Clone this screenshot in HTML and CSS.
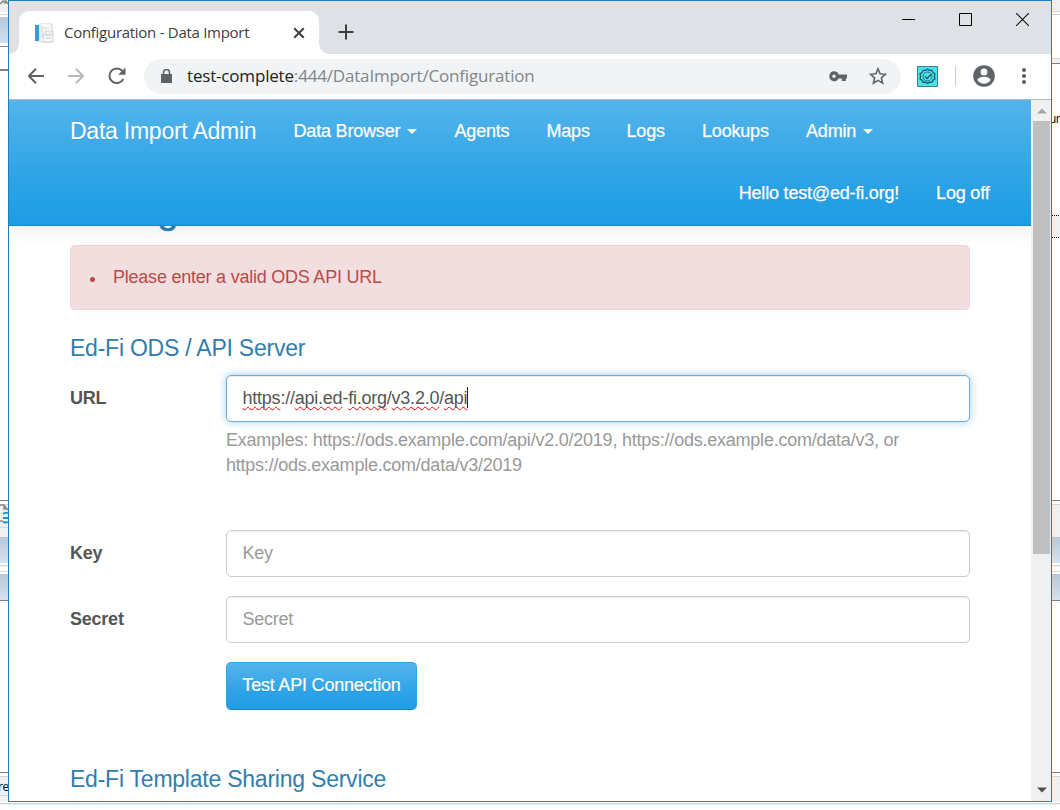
FILE: index.html
```html
<!DOCTYPE html>
<html lang="en">
<head>
<meta charset="utf-8">
<title>Configuration - Data Import</title>
<link rel="stylesheet" href="styles.css">
</head>
<body>
<div class="desktop">
  <div class="edge edge-left">
    <svg class="edge-icon edge-icon-top" width="8" height="5" viewBox="0 0 8 5"><path d="M0 4L3 1 5 3 7 1M5 0l3 4" stroke="#888" stroke-width="1.5" fill="none"/></svg>
    <svg class="edge-icon edge-icon-mid" width="8" height="20" viewBox="0 0 8 20"><path d="M0 1h4l4 5M4 1v4h4M0 17h3" stroke="#888" stroke-width="1.4" fill="none"/><path d="M3 10q2-2 5-1M3 14h5M3 18q3 1 5 0" stroke="#189ad6" stroke-width="2" fill="none"/></svg>
    <span class="edge-text edge-text-bottom">re</span>
  </div>

  <main class="window">
    <header class="tabstrip">
      <div class="tab">
        <svg class="favicon" width="20" height="20" viewBox="0 0 20 20"><path d="M1 1h18v18H1z" fill="#eceff2"/><path d="M1 2h4v16H1z" fill="#4099d4"/><path d="M6 0h10l2 3v16H6z" fill="#f9f9f9" stroke="#d8dbde"/><path d="M8 3v11h3M9 5h6M11 8h8v4h-8z" fill="#eceef0" stroke="#d3d6da"/><path d="M9 12h10v7H9z" fill="#f7f7f7" stroke="#ccd0d4"/><path d="M12 15h5" stroke="#ccc"/></svg>
        <span class="tab-title">Configuration - Data Import</span>
        <svg class="tab-close" width="12" height="12" viewBox="0 0 12 12"><path d="M1.2 1.2l9.6 9.6M10.8 1.2l-9.6 9.6" stroke="#3c4043" stroke-width="2"/></svg>
      </div>
      <svg class="new-tab" width="16" height="16" viewBox="0 0 16 16"><path d="M8 .5v15M.5 8h15" stroke="#3c4043" stroke-width="2"/></svg>
      <div class="controls">
        <svg width="13" height="13" viewBox="0 0 13 13"><path d="M0 6.5h13" stroke="#000"/></svg>
        <svg width="13" height="13" viewBox="0 0 13 13"><path d="M.5.5h12v12H.5z" stroke="#000" fill="none"/></svg>
        <svg width="13" height="13" viewBox="0 0 13 13"><path d="M0 0l13 13M13 0L0 13" stroke="#111" stroke-width="1.1"/></svg>
      </div>
    </header>

    <div class="toolbar">
      <svg class="back" width="16" height="16" viewBox="0 0 16 16"><path d="M16 8H1.6M8 .8L1 8l7 7.2" stroke="#5f6368" stroke-width="2" fill="none"/></svg>
      <svg class="forward" width="16" height="16" viewBox="0 0 16 16"><path d="M0 8h14.4M8 .8L15 8l-7 7.2" stroke="#b8babc" stroke-width="2" fill="none"/></svg>
      <svg class="reload" width="18" height="18" viewBox="0 0 18 18"><path d="M15.3 12A7.3 7.3 0 1 1 14.3 4" stroke="#5f6368" stroke-width="2" fill="none"/><path d="M17.5.5v7.3h-7.3z" fill="#5f6368"/></svg>
      <div class="omnibox">
        <svg class="lock" width="11" height="14" viewBox="0 0 11 14"><path d="M0 5h11v9H0z" fill="#5f6368"/><path d="M2.5 5V3.4a3 3 0 0 1 6 0V5" stroke="#5f6368" stroke-width="1.5" fill="none"/></svg>
        <span class="address"><span class="host">test-complete</span>:444/DataImport/Configuration</span>
        <svg class="key" width="18" height="11" viewBox="0 0 18 11"><path fill-rule="evenodd" d="M5 .3a4.9 4.9 0 0 1 4.6 3.3H18v3.8h-1.2V10h-4V7.4H9.6A4.9 4.9 0 1 1 5 .3zM5 3.5a1.8 1.8 0 1 0 0 3.6 1.8 1.8 0 0 0 0-3.6z" fill="#5f6368"/></svg>
        <svg class="star" width="18" height="18" viewBox="0 0 18 18"><path d="M9 1.8l2.1 5 5.3.5-4 3.6 1.2 5.3L9 13.4l-4.6 2.8 1.2-5.3-4-3.6 5.3-.5z" stroke="#5f6368" stroke-width="1.6" fill="none"/></svg>
      </div>
      <svg class="extension" width="21" height="21" viewBox="0 0 21 21"><path d="M.5.5h20v20H.5z" fill="#45e3ea" stroke="#3f7f91"/><path d="M10.5 3.2l2 1.2 2.4-.1 1 2.2 2 1.3-.5 2.6.6 2.3-2 1.4-1.1 2.2-2.4-.1-2 1.3-2-1.3-2.4.1L5 14.1l-2-1.4.6-2.3L3 7.8l2-1.3 1.1-2.2 2.4.1z" fill="none" stroke="#245666" stroke-width="1.3"/><circle cx="10.5" cy="10.5" r="4.5" fill="none" stroke="#245666" stroke-width=".8"/><path d="M8 10.5l2 2 4.3-4.2" fill="none" stroke="#245666" stroke-width="1.3"/></svg>
      <span class="divider"></span>
      <svg class="profile" width="22" height="22" viewBox="0 0 22 22"><circle cx="11" cy="11" r="10.8" fill="#5f6368"/><circle cx="11" cy="7" r="3.4" fill="#fff"/><path d="M4.3 15.1c1.5-4.4 11.9-4.4 13.4 0a8 8 0 0 1-13.4 0z" fill="#fff"/></svg>
      <svg class="more" width="6" height="18" viewBox="0 0 6 18"><g fill="#5f6368"><circle cx="3" cy="3" r="2.1"/><circle cx="3" cy="9" r="2.1"/><circle cx="3" cy="15" r="2.1"/></g></svg>
    </div>

    <div class="viewport">
      <div class="page">
        <nav class="navbar">
          <div class="nav-row">
            <a class="brand">Data Import Admin</a>
            <a class="nav-browser">Data Browser<i class="caret"></i></a>
            <a class="nav-agents">Agents</a>
            <a class="nav-maps">Maps</a>
            <a class="nav-logs">Logs</a>
            <a class="nav-lookups">Lookups</a>
            <a>Admin<i class="caret"></i></a>
          </div>
          <div class="nav-row nav-user">
            <a>Hello test@ed-fi.org!</a>
            <a>Log off</a>
          </div>
        </nav>
        <div class="title-clip"><h1>Configuration</h1></div>
        <ul class="alert"><li>Please enter a valid ODS API URL</li></ul>
        <h2 class="section">Ed-Fi ODS / API Server</h2>
        <form class="form">
          <label>URL</label>
          <div class="field url-field">
            <div class="input focused"><span class="misspelled">https</span>://<span class="misspelled">api.ed</span>-<span class="misspelled">fi.org</span>/<span class="misspelled">v3.2.0</span>/<span class="misspelled">api</span><i class="cursor"></i></div>
            <p class="help">Examples: https://ods.example.com/api/v2.0/2019, https://ods.example.com/data/v3, or<br>https://ods.example.com/data/v3/2019</p>
          </div>
          <label>Key</label>
          <div class="input placeholder">Key</div>
          <label>Secret</label>
          <div class="input placeholder">Secret</div>
          <button class="test-button" type="button">Test API Connection</button>
        </form>
        <h2 class="section sharing">Ed-Fi Template Sharing Service</h2>
      </div>
      <div class="scrollbar">
        <svg width="10" height="6" viewBox="0 0 10 6"><path d="M0 5.5L5 .5l5 5z" fill="#a3a3a3"/></svg>
        <div class="thumb"></div>
        <svg class="scroll-down" width="10" height="6" viewBox="0 0 10 6"><path d="M0 .5h10l-5 5z" fill="#505050"/></svg>
      </div>
    </div>
  </main>

  <div class="edge edge-right"><span class="edge-text edge-text-top">ur</span></div>
</div>
</body>
</html>
```

FILE: styles.css
```css
* { box-sizing: border-box; }
body { margin: 0; background: #fff; overflow: hidden; font-family: "Liberation Sans", Arial, sans-serif; }
svg { display: block; flex: none; }

.desktop {
  height: 805px;
  display: grid;
  grid-template-columns: 8px 1044px 8px;
  background: linear-gradient(#fff 803px, #d2d2d2 803px 804px, #f0f0f0 804px);
}
.edge { position: relative; overflow: hidden; }
.edge-left {
  background: linear-gradient(#f0f0f0 12px, #fff 12px 14px, #d5d5d5 14px 15px, #fff 15px 17px, #b8c8d8 17px, #d0dfef 43px, #fff 43px 46px, #7e7e8c 46px 47px, #fff 47px 69px, #7e7e8c 69px 71px, #fff 71px 500px, #7e7e8c 500px 501px, #fff 501px 504px, #d5d5d5 504px 505px, #f0f0f0 505px 527px, #d5d5d5 527px 528px, #f0f0f0 528px 537px, #b8c8d8 537px, #d4e2f1 563px, #fff 563px 565px, #d5d5d5 565px 566px, #f0f0f0 566px 567px, #fff 567px 571px, #d5d5d5 571px 572px, #fff 572px 574px, #b8c8d8 574px, #d4e2f1 600px, #7e7e8c 600px 601px, #fff 601px 772px, #7e7e8c 772px 773px, #fff 773px 776px, #d5d5d5 776px 777px, #f0f0f0 777px 795px, #d5d5d5 795px 796px, #f0f0f0 796px 801px, #fff 801px 803px, #d5d5d5 803px 804px, #f0f0f0 804px);
}
.edge-right {
  background:
    repeating-linear-gradient(90deg, #000 0 1px, #fff 1px 2px) 0 215px / 8px 1px no-repeat,
    repeating-linear-gradient(90deg, #000 0 1px, #fff 1px 2px) 0 237px / 8px 1px no-repeat,
    linear-gradient(#f0f0f0 11px, #d5d5d5 11px 12px, #fff 12px 14px, #d5d5d5 14px 15px, #fff 15px 58px, #d5d5d5 58px 59px, #f0f0f0 59px 63px, #7e7e8c 63px 64px, #fff 64px 216px, #f0f0f0 216px 237px, #fff 237px 500px, #7e7e8c 500px 501px, #fff 501px 504px, #d5d5d5 504px 505px, #f0f0f0 505px 537px, #b8c8d8 537px, #d4e2f1 563px, #fff 563px 565px, #d5d5d5 565px 566px, #f0f0f0 566px 567px, #fff 567px 571px, #d5d5d5 571px 572px, #fff 572px 574px, #b8c8d8 574px, #d4e2f1 600px, #7e7e8c 600px 601px, #fff 601px 772px, #7e7e8c 772px 773px, #fff 773px 776px, #d5d5d5 776px 777px, #f0f0f0 777px 801px, #fff 801px 803px, #d5d5d5 803px 804px, #f0f0f0 804px);
}
.edge-icon { position: absolute; left: 0; }
.edge-icon-top { top: 0; }
.edge-icon-mid { top: 504px; }
.edge-text { position: absolute; font: 12px/16px "Open Sans", sans-serif; letter-spacing: -.5px; color: #000; }
.edge-text-bottom { top: 779px; left: -2px; }
.edge-text-top { top: 111px; left: -3px; }

.window { height: 802px; border: 1px solid #1c7fc0; background: #fff; overflow: hidden; }
.tabstrip { height: 53px; background: #dee1e6; display: flex; align-items: flex-start; }
.tab {
  width: 300px; height: 43px; margin: 10px 0 0 10px; padding: 0 14px 0 15px;
  background: #fff; border-radius: 10px 10px 0 0;
  display: flex; align-items: center; position: relative;
}
.tab::before, .tab::after { content: ""; position: absolute; bottom: 0; width: 10px; height: 10px; }
.tab::before { left: -10px; background: radial-gradient(circle at 0 0, transparent 9.5px, #fff 10px); }
.tab::after { right: -10px; background: radial-gradient(circle at 100% 0, transparent 9.5px, #fff 10px); }
.tab-title { font: 15px/20px "Open Sans", sans-serif; color: #3c4043; margin: 0 0 2px 10px; white-space: nowrap; letter-spacing: -.28px; }
.tab-close { margin-left: auto; }
.new-tab { margin: 23px 0 0 19px; }
.controls { display: flex; gap: 44px; margin: 12px 22px 0 auto; }

.toolbar { height: 45px; display: flex; align-items: center; padding: 0 24px 1px 19px; background: #fff; }
.forward { margin-left: 24px; }
.reload { margin-left: 24px; }
.omnibox { width: 757px; height: 35px; margin-left: 18px; border-radius: 18px; background: #f1f3f4; display: flex; align-items: center; padding: 0 14px 0 17px; }
.address { margin-left: 15px; font: 17px/24px "Open Sans", sans-serif; color: #80868b; white-space: nowrap; letter-spacing: -.18px; }
.host { color: #202124; }
.key { margin-left: auto; }
.star { margin-left: 22px; }
.extension { margin-left: 16px; }
.divider { width: 1px; height: 20px; margin-left: 17px; background: #ccced1; }
.profile { margin-left: 17px; }
.more { margin-left: auto; }

.viewport { height: 702px; display: flex; border-top: 1px solid #b5b8bb; }
.page { width: 1022px; overflow: hidden; font-size: 18px; line-height: 25px; letter-spacing: -.23px; color: #555; }
.navbar {
  position: relative; z-index: 1; height: 126px; padding: 0 41px 0 61px;
  background: linear-gradient(#54b4eb, #2fa4e7 60%, #1d9ce5);
  border-bottom: 1px solid #178acc; box-shadow: 0 1px 22px rgba(0,0,0,.1);
  color: #fff; text-shadow: 0 1px 0 rgba(0,0,0,.1);
}
.nav-row { height: 62px; display: flex; align-items: center; white-space: nowrap; letter-spacing: -.19px; -webkit-text-stroke: .25px #fff; }
.brand { font-size: 23px; width: 223.5px; letter-spacing: -.24px; -webkit-text-stroke: 0; }
.nav-browser { width: 161px; }
.nav-agents { width: 92px; }
.nav-maps { width: 80px; }
.nav-logs { width: 75.5px; }
.nav-lookups { width: 104px; }
.nav-user { justify-content: flex-end; gap: 37px; }
.nav-user a:last-child { margin-right: .5px; }
.caret { display: inline-block; margin-left: 7px; vertical-align: 3px; border: 5px solid transparent; border-top-color: #fff; border-bottom: 0; }

.title-clip { height: 19px; display: flex; align-items: flex-start; padding-left: 61px; }
.title-clip h1 { margin: -38px 0 0; font-size: 38px; line-height: 44px; font-weight: 400; color: #317eac; -webkit-text-stroke: .4px #317eac; }
.alert { margin: 0 61px; height: 65px; padding: 19px 20px 0 19px; border: 1px solid #eed3d7; border-radius: 5px; background: #f2dede; color: #b94a48; list-style: none; }
.alert li { display: flex; align-items: center; gap: 18px; }
.alert li::before { content: ""; width: 5px; height: 5px; margin-top: 3px; border-radius: 50%; background: #b94a48; }
.section { margin: 24px 61px 0; font-size: 23px; line-height: 28px; font-weight: 400; color: #317eac; }
.form { display: grid; grid-template-columns: 156px 744px; row-gap: 19px; margin: 13px 61px 0; }
label { padding-top: 11px; font-weight: 700; }
.url-field { height: 136px; }
.input { height: 47px; border: 1px solid #ccc; border-radius: 5px; padding: 10px 16px 10px 15.5px; background: #fff; box-shadow: inset 0 1px 1px rgba(0,0,0,.075); }
.focused { border-color: #66afe9; box-shadow: inset 0 1px 1px rgba(0,0,0,.075), 0 0 9px rgba(102,175,233,.6); }
.placeholder { color: #999; }
.misspelled { text-decoration: underline wavy #f00 1px; text-underline-offset: 2px; text-decoration-skip-ink: none; }
.cursor { display: inline-block; width: 1px; height: 21px; margin-right: -1px; background: #222; vertical-align: -4px; }
.help { margin: 6px 0 0; color: #999; white-space: nowrap; }
.test-button { grid-column: 2; width: 191px; height: 48px; padding: 0 0 2px; border: 1px solid #2fa4e7; border-bottom-color: #178acc; border-radius: 5px; background: linear-gradient(#54b4eb, #2fa4e7 60%, #1d9ce5); color: #fff; font: 18px/25px "Liberation Sans", Arial, sans-serif; letter-spacing: -.2px; -webkit-text-stroke: .2px #fff; text-shadow: 0 1px 0 rgba(0,0,0,.1); white-space: nowrap; }
.sharing { margin-top: 55px; }

.scrollbar { width: 20px; background: #f0f0f0; padding: 8px 1px 8px 2px; display: flex; flex-direction: column; align-items: center; }
.thumb { width: 17px; height: 433px; margin-top: 7px; background: #c0c0c0; }
.scroll-down { margin-top: auto; }
```
